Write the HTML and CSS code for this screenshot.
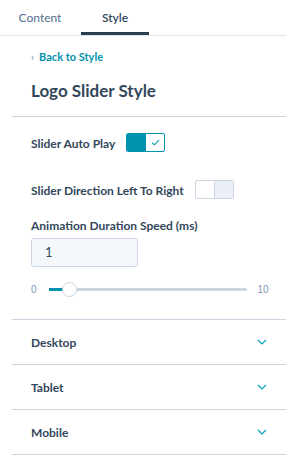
FILE: index.html
```html
<!DOCTYPE html>
<html lang="en">
<head>
    <meta charset="UTF-8">
    <meta name="viewport" content="width=device-width, initial-scale=1.0">
    <title>Logo Slider Style</title>
    <link rel="stylesheet" href="styles.css">
</head>
<body>
    <div class="tabs">
        <div class="tab">Content</div>
        <div class="tab active">Style</div>
    </div>
    <div class="panel">
        <a class="back-link" href="#"><span class="back-chevron">&#8249;</span>Back to Style</a>
        <h1 class="panel-title">Logo Slider Style</h1>
    </div>
    <div class="section">
        <div class="field-row">
            <span class="field-label">Slider Auto Play</span>
            <div class="toggle on">
                <span class="toggle-left"></span>
                <span class="toggle-right">
                    <svg width="9" height="7" viewBox="0 0 9 7"><path d="M1 3.6 L3.4 5.8 L8 1.2" fill="none" stroke="#0091ae" stroke-width="1.1"/></svg>
                </span>
            </div>
        </div>
        <div class="field-row second">
            <span class="field-label">Slider Direction Left To Right</span>
            <div class="toggle off">
                <span class="toggle-left"></span>
                <span class="toggle-right"></span>
            </div>
        </div>
        <div class="field-label block">Animation Duration Speed (ms)</div>
        <div class="number-input">1</div>
        <div class="range">
            <span class="range-num">0</span>
            <div class="range-track">
                <div class="range-fill"></div>
                <div class="range-handle"></div>
            </div>
            <span class="range-num">10</span>
        </div>
    </div>
    <div class="accordion">
        <div class="acc-row">
            <span>Desktop</span>
            <svg width="10" height="6" viewBox="0 0 10 6"><path d="M1 1 L5 5 L9 1" fill="none" stroke="#00a4bd" stroke-width="1.2"/></svg>
        </div>
        <div class="acc-row">
            <span>Tablet</span>
            <svg width="10" height="6" viewBox="0 0 10 6"><path d="M1 1 L5 5 L9 1" fill="none" stroke="#00a4bd" stroke-width="1.2"/></svg>
        </div>
        <div class="acc-row">
            <span>Mobile</span>
            <svg width="10" height="6" viewBox="0 0 10 6"><path d="M1 1 L5 5 L9 1" fill="none" stroke="#00a4bd" stroke-width="1.2"/></svg>
        </div>
    </div>
</body>
</html>
```

FILE: styles.css
```css
body {
    margin: 0;
    font-family: Lato, "Liberation Sans", sans-serif;
    color: #33475b;
    background-color: #fff;
}
.tabs {
    display: flex;
    gap: 7px;
    padding-left: 6px;
    height: 36px;
    border-bottom: 1px solid #dfe3eb;
    box-sizing: border-box;
}
.tab {
    width: 68px;
    padding-top: 3px;
    line-height: 30px;
    text-align: center;
    font-size: 12px;
    color: #516f90;
    border-bottom: 3px solid transparent;
}
.tab.active {
    color: #33475b;
    font-weight: 600;
    border-bottom-color: #2d3e50;
}
.panel {
    padding: 14px 0 0 31px;
}
.back-link {
    display: block;
    font-size: 11px;
    line-height: 14px;
    font-weight: 700;
    color: #0091ae;
    text-decoration: none;
}
.back-chevron {
    color: #7c98b6;
    font-weight: 400;
    margin-right: 5px;
}
.panel-title {
    margin: 16px 0 0;
    font-size: 17px;
    line-height: 22px;
    font-weight: 700;
    padding-bottom: 14px;
}
.section {
    margin-left: 12px;
    border-top: 1px solid #cbd6e2;
    padding: 16px 0 22px 19px;
}
.field-row {
    display: flex;
    align-items: center;
    gap: 11px;
    height: 19px;
}
.field-row.second {
    margin-top: 28px;
}
.field-label {
    font-size: 12px;
    font-weight: 700;
}
.field-row .field-label {
    padding-top: 2px;
}
.field-label.block {
    margin-top: 19px;
    line-height: 16px;
}
.toggle {
    display: flex;
    width: 39px;
    height: 19px;
    box-sizing: border-box;
    border: 1px solid #cbd6e2;
    border-radius: 2px;
    overflow: hidden;
}
.toggle-left, .toggle-right {
    flex: 1;
    display: flex;
    align-items: center;
    justify-content: center;
}
.toggle.on {
    border-color: #0091ae;
}
.toggle.on .toggle-left {
    background-color: #0091ae;
}
.toggle.off .toggle-right {
    background-color: #eaf0f6;
    border-left: 1px solid #cbd6e2;
}
.number-input {
    margin-top: 4px;
    width: 107px;
    height: 29px;
    box-sizing: border-box;
    border: 1px solid #cbd6e2;
    border-radius: 3px;
    background-color: #f5f8fa;
    padding-left: 13px;
    font-size: 13px;
    line-height: 27px;
}
.range {
    display: flex;
    align-items: center;
    margin-top: 15px;
    height: 15px;
}
.range-num {
    font-family: "Liberation Sans", sans-serif;
    font-size: 10px;
    color: #7c98b6;
}
.range-track {
    position: relative;
    width: 198px;
    height: 3px;
    margin: 0 11px 0 12px;
    background-color: #cbd6e2;
    border-radius: 2px;
}
.range-fill {
    width: 16px;
    height: 3px;
    background-color: #0091ae;
}
.range-handle {
    position: absolute;
    left: 13px;
    top: -6px;
    width: 15px;
    height: 15px;
    box-sizing: border-box;
    border: 1px solid #cbd6e2;
    border-radius: 50%;
    background-color: #fff;
}
.accordion {
    margin-left: 12px;
}
.acc-row {
    display: flex;
    align-items: center;
    justify-content: space-between;
    height: 44px;
    border-top: 1px solid #cbd6e2;
    padding: 0 19px;
    font-size: 12px;
    font-weight: 700;
}
.acc-row:last-child {
    border-bottom: 1px solid #cbd6e2;
}
```
